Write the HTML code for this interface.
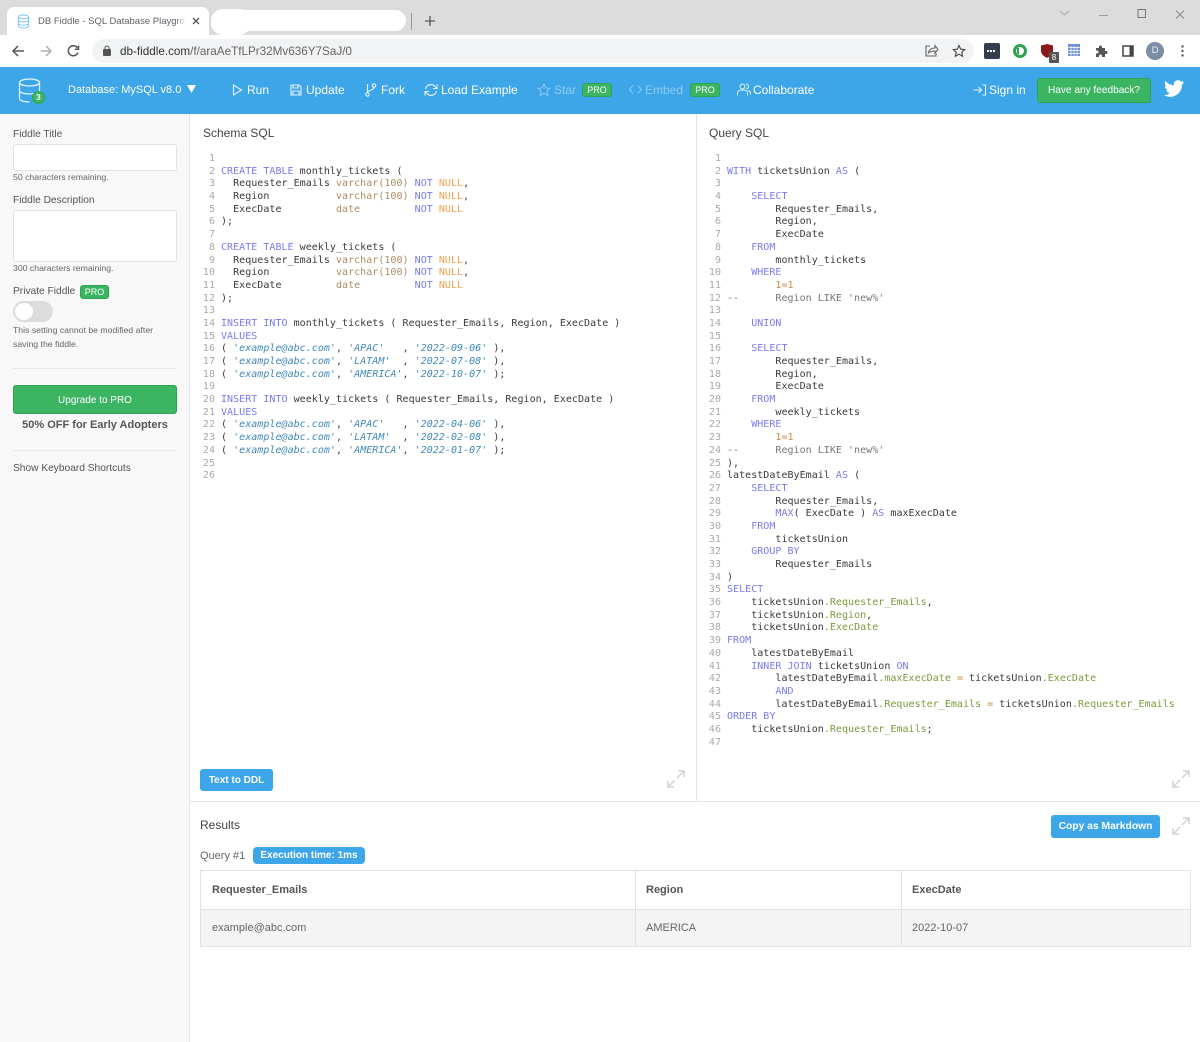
<!DOCTYPE html>
<html><head><meta charset="utf-8"><title>DB Fiddle</title>
<style>
*{box-sizing:border-box}
html,body{margin:0;padding:0}
body{width:1200px;height:1042px;position:relative;overflow:hidden;background:#fff;font-family:"Liberation Sans",Arial,sans-serif;color:#555}
#w{position:absolute;left:0;top:0;width:1200px;height:1042px;filter:blur(.35px);overflow:hidden}
.a{position:absolute;white-space:nowrap}
svg{position:absolute;overflow:visible}
.nav{color:#fff;font-size:12px;line-height:16px;top:82px}
.dim{color:#8fcbf2}
.pro{position:absolute;background:#3cb563;border:1px solid #2fa352;border-radius:3px;color:#fff;font-size:9px;line-height:12px;text-align:center}
pre{position:absolute;margin:0;font-family:"DejaVu Sans Mono",monospace;font-size:10px;line-height:12.69px;letter-spacing:.03px;color:#3a3a3a}
pre.n{color:#a9a9a9;text-align:right;width:20px}
i.k{font-style:normal;color:#7a7aea}
i.o{font-style:normal;color:#f0a24e}
i.t{font-style:normal;color:#b08a63}
i.s{font-style:italic;color:#3f88b5}
i.g{font-style:normal;color:#7a9b3a}
i.u{font-style:normal;color:#c9883f}
i.c{font-style:normal;color:#777}
.lab{font-size:10.2px;color:#555}
.sm{font-size:8.7px;color:#666}
.btn{position:absolute;background:#3ca6e8;border-radius:3px;color:#fff;font-weight:bold;font-size:10px;text-align:center}
</style></head><body><div id="w">

<!-- Chrome tab strip -->
<div class="a" style="left:0;top:0;width:1200px;height:36px;background:#dcdcdc"></div>
<div class="a" style="left:7px;top:7px;width:202px;height:29px;background:#fff;border-radius:7px 7px 0 0"></div>
<svg style="left:17px;top:14px" width="13" height="15" viewBox="0 0 14 16" fill="none" stroke="#7cc4f2" stroke-width="1.1"><ellipse cx="7" cy="3" rx="5.5" ry="2"/><path d="M1.5 3v10c0 1.1 2.5 2 5.500 2s5.500-.9 5.500-2V3M1.500 6.500c0 1.100 2.500 2 5.500 2s5.500-.9 5.500-2M1.500 10c0 1.100 2.500 2 5.500 2s5.500-.9 5.500-2"/></svg>
<div class="a" style="left:38px;top:15px;width:147px;overflow:hidden;font-size:9.5px;line-height:14px;color:#5f6368">DB Fiddle - SQL Database Playground</div>
<div class="a" style="left:176px;top:14px;width:10px;height:15px;background:linear-gradient(90deg,rgba(255,255,255,0),#fff)"></div>
<svg style="left:192px;top:17px" width="8" height="8" viewBox="0 0 8 8" stroke="#555" stroke-width="1.3"><path d="M1 1l6 6M7 1L1 7"/></svg>
<div class="a" style="left:211px;top:9px;width:40px;height:26px;background:#fff;border-radius:12px"></div>
<div class="a" style="left:225px;top:10px;width:181px;height:21px;background:#fff;border-radius:11px"></div>
<div class="a" style="left:411px;top:13px;width:1px;height:17px;background:#9a9a9a"></div>
<svg style="left:424px;top:15px" width="12" height="12" viewBox="0 0 12 12" stroke="#555" stroke-width="1.3"><path d="M6 1v10M1 6h10"/></svg>
<svg style="left:1059px;top:9px" width="141" height="12" viewBox="0 0 141 12" fill="none" stroke="#8a8a8a" stroke-width="1"><path d="M1 2l4.500 4L10 2" stroke="#aaa"/><path d="M40 6.500h9" stroke="#999"/><rect x="79" y=".5" width="7.5" height="8" stroke="#777"/><path d="M117 1.500l8 8M125 1.500l-8 8"/></svg>

<!-- Chrome toolbar -->
<div class="a" style="left:0;top:35px;width:1200px;height:32px;background:#fff"></div>
<div class="a" style="left:92px;top:39px;width:882px;height:24px;background:#f1f3f4;border-radius:12px"></div>
<svg style="left:11px;top:44px" width="70" height="14" viewBox="0 0 70 14" fill="none" stroke-width="1.5"><path d="M13 7H2M7 2L2 7l5 5" stroke="#555"/><path d="M40 7H29.500M35 2l5 5-5 5" stroke="#b0b0b0"/><path d="M66.500 4A5 5 0 1 0 67 8.500" stroke="#555"/><path d="M67.500 1.500v3.700h-3.700" stroke="#555"/></svg>
<svg style="left:103px;top:45px" width="8" height="11" viewBox="0 0 8 11"><rect y="4" width="8" height="7" rx="1" fill="#555"/><path d="M2 4.500V3a2 2 0 0 1 4 0v1.500" fill="none" stroke="#555"/></svg>
<div class="a" style="left:120px;top:43.5px;font-size:11.7px;line-height:15px;color:#333">db-fiddle.com<span style="color:#666">/f/araAeTfLPr32Mv636Y7SaJ/0</span></div>
<svg style="left:925px;top:44px" width="42" height="14" viewBox="0 0 42 14" fill="none" stroke="#666" stroke-width="1.1"><path d="M5 2H1v10h10V9M3.500 9c.5-3.500 3-5 6.500-5V1.500L13 5.500 10 9V7C7.500 7 5 7.500 3.500 9z"/><path d="M34 1.500l1.700 3.700 4 .4-3 2.700.9 4-3.600-2.100-3.600 2.100.9-4-3-2.700 4-.4z" stroke="#444"/></svg>
<div class="a" style="left:984px;top:43px;width:16px;height:16px;background:#333c4a;border-radius:2px"></div>
<div class="a" style="left:987px;top:50px;width:8px;height:2px;border-top:2px dotted #fff"></div>
<div class="a" style="left:1013px;top:44px;width:14px;height:14px;border-radius:50%;border:3px solid #2da44e;background:#fff"></div>
<div class="a" style="left:1017px;top:48px;width:2px;height:6px;background:#2da44e"></div>
<svg style="left:1041px;top:44px" width="13" height="14" viewBox="0 0 13 14"><path d="M0 1.500L6 0l6 1.500V7c0 3-3 5.500-6 7C3 12.500 0 10 0 7z" fill="#8b1a1a"/></svg>
<div class="a" style="left:1049px;top:52px;width:10px;height:11px;background:#555;color:#fff;font-size:8px;line-height:11px;text-align:center;border-radius:1px">8</div>
<svg style="left:1068px;top:44px" width="12" height="12" viewBox="0 0 12 12"><rect width="12" height="12" fill="#6f8fd6"/><path d="M0 3.500h12M0 6.500h12M0 9.500h12M3 2v10M6 2v10M9 2v10" stroke="#fff" stroke-width=".7"/></svg>
<svg style="left:1095px;top:45px" width="12" height="12" viewBox="0 0 12 12"><path d="M1 3h3V2a1.500 1.500 0 0 1 3 0v1h3v3h1a1.500 1.500 0 0 1 0 3h-1v3H7v-1a1.500 1.500 0 0 0-3 0v1H1V8.500h1a1.500 1.500 0 0 0 0-3H1z" fill="#555"/></svg>
<svg style="left:1122px;top:45px" width="12" height="12" viewBox="0 0 12 12" fill="none"><rect x="1" y="1" width="10" height="10" stroke="#444" stroke-width="1.5"/><rect x="7.500" y="1" width="3.500" height="10" fill="#444"/></svg>
<div class="a" style="left:1146px;top:42px;width:18px;height:18px;border-radius:50%;background:#7b8ea3;color:#e8edf2;font-size:9.5px;line-height:18px;text-align:center">D</div>
<svg style="left:1181px;top:45px" width="3" height="12" viewBox="0 0 3 12" fill="#555"><circle cx="1.5" cy="1.5" r="1.2"/><circle cx="1.5" cy="6" r="1.2"/><circle cx="1.5" cy="10.5" r="1.2"/></svg>

<!-- App nav -->
<div class="a" style="left:0;top:67px;width:1200px;height:47px;background:#3ca6e8"></div>
<svg style="left:18px;top:78px" width="24" height="26" viewBox="0 0 24 26" fill="none" stroke="#e6f4fd" stroke-width="1.3"><ellipse cx="11.5" cy="4.5" rx="10" ry="3.5"/><path d="M1.500 4.500v16c0 2 4.500 3.500 10 3.500M21.500 4.500V18M1.500 12.500c0 2 4.500 3.500 10 3.500s10-1.500 10-3.500"/></svg>
<div class="a" style="left:32px;top:91px;width:13px;height:13px;border-radius:50%;background:#3cb563;border:1px solid #2fa352;color:#fff;font-size:8px;line-height:11px;text-align:center;font-weight:bold">3</div>
<div class="a nav" style="left:68px;font-size:11px">Database: MySQL v8.0</div>
<svg style="left:187px;top:85px" width="9" height="8" viewBox="0 0 9 8"><path d="M0 0h9L4.500 8z" fill="#fff"/></svg>

<svg style="left:232px;top:84px" width="11" height="12" viewBox="0 0 11 12" fill="none" stroke="#e6f4fd" stroke-width="1.1"><path d="M1.500 1l8 5-8 5z"/></svg>
<div class="a nav" style="left:247px">Run</div>
<svg style="left:290px;top:84px" width="12" height="12" viewBox="0 0 12 12" fill="none" stroke="#e6f4fd" stroke-width="1.1"><path d="M1 1h8l2 2v8H1zM3 1v3h5V1M3 11V7h6v4"/></svg>
<div class="a nav" style="left:306px">Update</div>
<svg style="left:365px;top:83px" width="12" height="14" viewBox="0 0 12 14" fill="none" stroke="#e6f4fd" stroke-width="1.1"><circle cx="2.5" cy="11.5" r="1.7"/><circle cx="9" cy="2.5" r="1.7"/><path d="M2.500 9.500V1M9 4.500c0 3-6.500 2.500-6.500 5"/></svg>
<div class="a nav" style="left:381px">Fork</div>
<svg style="left:424px;top:83px" width="14" height="14" viewBox="0 0 14 14" fill="none" stroke="#e6f4fd" stroke-width="1.1"><path d="M1.500 6A5.500 5.500 0 0 1 11 3.500L13 5.500M13 1.500v4H9M12.500 8A5.500 5.500 0 0 1 3 10.500L1 8.500M1 12.500v-4h4"/></svg>
<div class="a nav" style="left:441px">Load Example</div>
<svg style="left:537px;top:83px" width="14" height="13" viewBox="0 0 14 13" fill="none" stroke="#8fcbf2" stroke-width="1"><path d="M7 1l1.800 3.900 4.200.5-3.100 2.900.8 4.200L7 10.400 3.300 12.500l.8-4.200L1 5.400l4.200-.5z"/></svg>
<div class="a nav dim" style="left:554px">Star</div>
<div class="pro" style="left:582px;top:83px;width:30px;height:14px">PRO</div>
<svg style="left:629px;top:85px" width="13" height="9" viewBox="0 0 13 9" fill="none" stroke="#8fcbf2" stroke-width="1"><path d="M4 .5L.7 4.500 4 8.500M9 .5l3.300 4L9 8.500"/></svg>
<div class="a nav dim" style="left:645px">Embed</div>
<div class="pro" style="left:690px;top:83px;width:30px;height:14px">PRO</div>
<svg style="left:737px;top:83px" width="14" height="13" viewBox="0 0 14 13" fill="none" stroke="#e6f4fd" stroke-width="1"><circle cx="5.5" cy="3.5" r="2.5"/><path d="M.5 12.500V10c0-1.500 1.500-3 5-3s5 1.500 5 3v2.500M9 1a2.500 2.500 0 0 1 0 5M11 7.500c1.500.5 2.500 1.500 2.500 3v1"/></svg>
<div class="a nav" style="left:753px">Collaborate</div>
<svg style="left:973px;top:84px" width="13" height="12" viewBox="0 0 13 12" fill="none" stroke="#e6f4fd" stroke-width="1.1"><path d="M.5 6h7.500M5.500 3L8.500 6l-3 3M9.500 1h3v10h-3"/></svg>
<div class="a nav" style="left:989px">Sign in</div>
<div class="a" style="left:1037px;top:78px;width:114px;height:25px;background:#3cb563;border:1px solid #2fa352;border-radius:3px;color:#fff;font-size:10.1px;line-height:23px;text-align:center">Have any feedback?</div>
<svg style="left:1164px;top:80px" width="20" height="17" viewBox="0 0 24 20"><path d="M24 2.400c-.9.400-1.800.7-2.800.8 1-.6 1.800-1.600 2.200-2.700-1 .6-2 1-3.100 1.200A4.900 4.900 0 0 0 11.900 6.200C7.800 6 4.200 4 1.700.9.400 3.200 1 6.100 3.200 7.500c-.8 0-1.600-.2-2.200-.6 0 2.400 1.700 4.400 3.900 4.900-.7.200-1.500.2-2.200.1.600 2 2.400 3.400 4.600 3.400A9.900 9.900 0 0 1 0 17.800 14 14 0 0 0 21.500 5.400c1-.7 1.800-1.600 2.500-3z" fill="#fff"/></svg>

<!-- Sidebar -->
<div class="a" style="left:0;top:114px;width:190px;height:928px;background:#f8f8f8;border-right:1px solid #e4e4e4"></div>
<div class="a lab" style="left:13px;top:129px">Fiddle Title</div>
<div class="a" style="left:13px;top:144px;width:164px;height:27px;background:#fff;border:1px solid #e2e2e2;border-radius:3px"></div>
<div class="a sm" style="left:13px;top:172px">50 characters remaining.</div>
<div class="a lab" style="left:13px;top:195px">Fiddle Description</div>
<div class="a" style="left:13px;top:210px;width:164px;height:52px;background:#fff;border:1px solid #e2e2e2;border-radius:3px"></div>
<div class="a sm" style="left:13px;top:263px">300 characters remaining.</div>
<div class="a lab" style="left:13px;top:286px">Private Fiddle</div>
<div class="pro" style="left:80px;top:285px;width:29px;height:14px">PRO</div>
<div class="a" style="left:13px;top:301px;width:40px;height:21px;border-radius:11px;background:#dcdcdc"></div>
<div class="a" style="left:15px;top:303px;width:18px;height:17px;border-radius:50%;background:#fff"></div>
<div class="a sm" style="left:13px;top:325px">This setting cannot be modified after</div>
<div class="a sm" style="left:13px;top:339px">saving the fiddle.</div>
<div class="a" style="left:13px;top:368px;width:164px;height:1px;background:#e8e8e8"></div>
<div class="a" style="left:13px;top:385px;width:164px;height:29px;background:#3cb563;border:1px solid #2fa352;border-radius:3px;color:#fff;font-size:10px;line-height:29px;text-align:center">Upgrade to PRO</div>
<div class="a" style="left:13px;top:418.5px;width:164px;text-align:center;font-size:11px;font-weight:bold;color:#555">50% OFF for Early Adopters</div>
<div class="a" style="left:13px;top:450px;width:164px;height:1px;background:#e8e8e8"></div>
<div class="a lab" style="left:13px;top:463px">Show Keyboard Shortcuts</div>

<!-- Panels -->
<div class="a" style="left:696px;top:114px;width:1px;height:687px;background:#e4e4e4"></div>
<div class="a" style="left:190px;top:801px;width:1010px;height:1px;background:#e4e4e4"></div>
<div class="a" style="left:203px;top:126px;font-size:12px;line-height:15px;color:#444">Schema SQL</div>
<div class="a" style="left:709px;top:126px;font-size:12px;line-height:15px;color:#444">Query SQL</div>

<pre class="n" style="left:195px;top:153px">1
2
3
4
5
6
7
8
9
10
11
12
13
14
15
16
17
18
19
20
21
22
23
24
25
26</pre>
<pre style="left:221px;top:153px">

<i class="k">CREATE TABLE</i> monthly_tickets (
  Requester_Emails <i class="t">varchar(100)</i> <i class="k">NOT</i> <i class="o">NULL</i>,
  Region           <i class="t">varchar(100)</i> <i class="k">NOT</i> <i class="o">NULL</i>,
  ExecDate         <i class="t">date</i>         <i class="k">NOT</i> <i class="o">NULL</i>
);

<i class="k">CREATE TABLE</i> weekly_tickets (
  Requester_Emails <i class="t">varchar(100)</i> <i class="k">NOT</i> <i class="o">NULL</i>,
  Region           <i class="t">varchar(100)</i> <i class="k">NOT</i> <i class="o">NULL</i>,
  ExecDate         <i class="t">date</i>         <i class="k">NOT</i> <i class="o">NULL</i>
);

<i class="k">INSERT INTO</i> monthly_tickets ( Requester_Emails, Region, ExecDate )
<i class="k">VALUES</i>
( <i class="s">'example@abc.com'</i>, <i class="s">'APAC'</i>   , <i class="s">'2022-09-06'</i> ),
( <i class="s">'example@abc.com'</i>, <i class="s">'LATAM'</i>  , <i class="s">'2022-07-08'</i> ),
( <i class="s">'example@abc.com'</i>, <i class="s">'AMERICA'</i>, <i class="s">'2022-10-07'</i> );

<i class="k">INSERT INTO</i> weekly_tickets ( Requester_Emails, Region, ExecDate )
<i class="k">VALUES</i>
( <i class="s">'example@abc.com'</i>, <i class="s">'APAC'</i>   , <i class="s">'2022-04-06'</i> ),
( <i class="s">'example@abc.com'</i>, <i class="s">'LATAM'</i>  , <i class="s">'2022-02-08'</i> ),
( <i class="s">'example@abc.com'</i>, <i class="s">'AMERICA'</i>, <i class="s">'2022-01-07'</i> );
</pre>

<pre class="n" style="left:701px;top:153px">1
2
3
4
5
6
7
8
9
10
11
12
13
14
15
16
17
18
19
20
21
22
23
24
25
26
27
28
29
30
31
32
33
34
35
36
37
38
39
40
41
42
43
44
45
46
47</pre>
<pre style="left:727px;top:153px">

<i class="k">WITH</i> ticketsUnion <i class="k">AS</i> (

    <i class="k">SELECT</i>
        Requester_Emails,
        Region,
        ExecDate
    <i class="k">FROM</i>
        monthly_tickets
    <i class="k">WHERE</i>
        <i class="u">1=1</i>
<i class="c">--      Region LIKE 'new%'</i>

    <i class="k">UNION</i>

    <i class="k">SELECT</i>
        Requester_Emails,
        Region,
        ExecDate
    <i class="k">FROM</i>
        weekly_tickets
    <i class="k">WHERE</i>
        <i class="u">1=1</i>
<i class="c">--      Region LIKE 'new%'</i>
),
latestDateByEmail <i class="k">AS</i> (
    <i class="k">SELECT</i>
        Requester_Emails,
        <i class="k">MAX</i>( ExecDate ) <i class="k">AS</i> maxExecDate
    <i class="k">FROM</i>
        ticketsUnion
    <i class="k">GROUP BY</i>
        Requester_Emails
)
<i class="k">SELECT</i>
    ticketsUnion<i class="g">.Requester_Emails</i>,
    ticketsUnion<i class="g">.Region</i>,
    ticketsUnion<i class="g">.ExecDate</i>
<i class="k">FROM</i>
    latestDateByEmail
    <i class="k">INNER JOIN</i> ticketsUnion <i class="k">ON</i>
        latestDateByEmail<i class="g">.maxExecDate</i> <i class="u">=</i> ticketsUnion<i class="g">.ExecDate</i>
        <i class="k">AND</i>
        latestDateByEmail<i class="g">.Requester_Emails</i> <i class="u">=</i> ticketsUnion<i class="g">.Requester_Emails</i>
<i class="k">ORDER BY</i>
    ticketsUnion<i class="g">.Requester_Emails</i>;
</pre>

<div class="btn" style="left:200px;top:769px;width:73px;height:22px;line-height:23px">Text to DDL</div>
<svg style="left:667px;top:770px" width="18" height="18" viewBox="0 0 18 18" fill="none" stroke="#d2d2d2" stroke-width="1.5"><path d="M10 8l7-7M11 1h6v6M8 10l-7 7M1 11v6h6"/></svg>
<svg style="left:1172px;top:770px" width="18" height="18" viewBox="0 0 18 18" fill="none" stroke="#d2d2d2" stroke-width="1.5"><path d="M10 8l7-7M11 1h6v6M8 10l-7 7M1 11v6h6"/></svg>

<!-- Results -->
<div class="a" style="left:200px;top:818px;font-size:12px;line-height:15px;color:#444">Results</div>
<div class="btn" style="left:1051px;top:815px;width:109px;height:23px;line-height:24px;font-size:10.3px">Copy as Markdown</div>
<svg style="left:1172px;top:817px" width="18" height="18" viewBox="0 0 18 18" fill="none" stroke="#d2d2d2" stroke-width="1.5"><path d="M10 8l7-7M11 1h6v6M8 10l-7 7M1 11v6h6"/></svg>
<div class="a" style="left:200px;top:848.5px;font-size:11px;line-height:14px;color:#666">Query #1</div>
<div class="btn" style="left:253px;top:847px;width:112px;height:17px;line-height:18px;border-radius:4px;font-size:10px">Execution time: 1ms</div>

<div class="a" style="left:200px;top:870px;width:991px;height:77px;border:1px solid #e2e2e2;background:#fff"></div>
<div class="a" style="left:201px;top:909px;width:989px;height:37px;background:#f4f4f4;border-top:1px solid #e2e2e2"></div>
<div class="a" style="left:635px;top:871px;width:1px;height:75px;background:#e2e2e2"></div>
<div class="a" style="left:901px;top:871px;width:1px;height:75px;background:#e2e2e2"></div>
<div class="a" style="left:212px;top:884px;font-size:11px;font-weight:bold;color:#555">Requester_Emails</div>
<div class="a" style="left:646px;top:884px;font-size:11px;font-weight:bold;color:#555">Region</div>
<div class="a" style="left:912px;top:884px;font-size:11px;font-weight:bold;color:#555">ExecDate</div>
<div class="a" style="left:212px;top:922px;font-size:11px;color:#666">example@abc.com</div>
<div class="a" style="left:646px;top:922px;font-size:11px;color:#666">AMERICA</div>
<div class="a" style="left:912px;top:922px;font-size:11px;color:#666">2022-10-07</div>

</div></body></html>
